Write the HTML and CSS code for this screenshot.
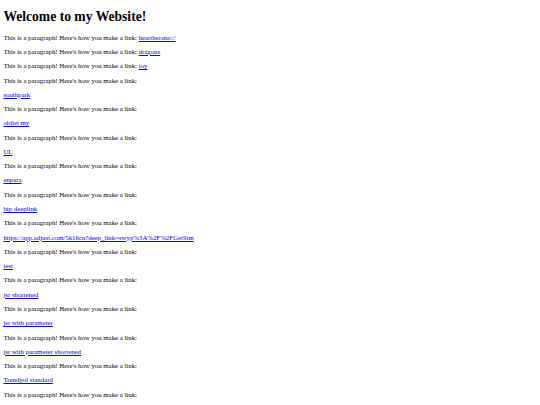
FILE: index.html
```html
<!DOCTYPE html>
<html>
<head>
<meta charset="utf-8">
<title>Welcome</title>
<link rel="stylesheet" href="styles.css">
</head>
<body class="page">
<h1 class="title">Welcome to my Website!</h1>
<p class="para">This is a paragraph! Here's how you make a link: <a class="link" href="#">hearthstone://</a></p>
<p class="para">This is a paragraph! Here's how you make a link: <a class="link" href="#">dragons</a></p>
<p class="para">This is a paragraph! Here's how you make a link: <a class="link" href="#">toy</a></p>
<p class="para">This is a paragraph! Here's how you make a link:</p>
<p class="para"><a class="link" href="#">southpark</a></p>
<p class="para">This is a paragraph! Here's how you make a link:</p>
<p class="para"><a class="link" href="#">obilet my</a></p>
<p class="para">This is a paragraph! Here's how you make a link:</p>
<p class="para"><a class="link" href="#">UL</a></p>
<p class="para">This is a paragraph! Here's how you make a link:</p>
<p class="para"><a class="link" href="#">enpara</a></p>
<p class="para">This is a paragraph! Here's how you make a link:</p>
<p class="para"><a class="link" href="#">bip deeplink</a></p>
<p class="para">This is a paragraph! Here's how you make a link:</p>
<p class="para"><a class="link" href="#">https://app.adjust.com/5k16cn?deep_link=swyp%3A%2F%2FGetSim</a></p>
<p class="para">This is a paragraph! Here's how you make a link:</p>
<p class="para"><a class="link" href="#">test</a></p>
<p class="para">This is a paragraph! Here's how you make a link:</p>
<p class="para"><a class="link" href="#">jsr shortened</a></p>
<p class="para">This is a paragraph! Here's how you make a link:</p>
<p class="para"><a class="link" href="#">jsr with parameter</a></p>
<p class="para">This is a paragraph! Here's how you make a link:</p>
<p class="para"><a class="link" href="#">jsr with parameter shortened</a></p>
<p class="para">This is a paragraph! Here's how you make a link:</p>
<p class="para"><a class="link" href="#">Trendyol standard</a></p>
<p class="para">This is a paragraph! Here's how you make a link:</p>
</body>
</html>
```

FILE: styles.css
```css
html {
  background: #ffffff;
}
.page {
  margin: 3.4px;
  font-family: "Liberation Serif", "Times New Roman", serif;
  color: #000000;
}
.title {
  font-size: 13.6px;
  line-height: 15.6px;
  font-weight: bold;
  margin: 5.8px 0 8.9px;
}
.para {
  font-size: 6.8px;
  line-height: 7.6px;
  margin: 6.7px 0;
}
.link {
  color: #0000ee;
  text-decoration: underline;
}
```
